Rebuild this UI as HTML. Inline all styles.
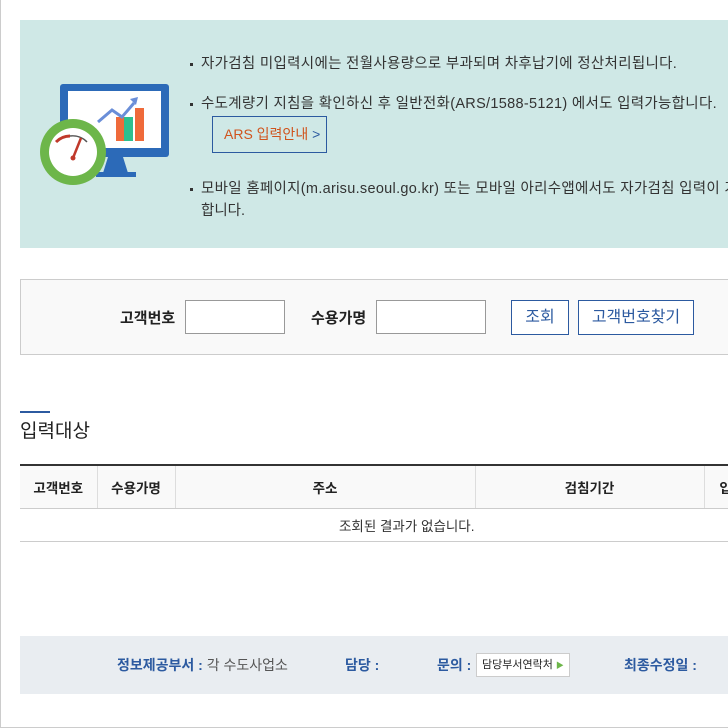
<!DOCTYPE html>
<html><head><meta charset="utf-8"><style>
*{margin:0;padding:0;box-sizing:border-box}
body{width:728px;height:728px;overflow:hidden;background:#fff;font-family:"Liberation Sans","Noto Sans CJK KR",sans-serif;color:#333;position:relative}
.frame{position:absolute;left:0;top:0;width:729px;height:728px;border-left:1px solid #ccc;border-bottom:1px solid #ccc}
.abs{position:absolute}
.banner{left:20px;top:20px;width:708px;height:228px;background:#cfe8e6}
.bl{font-size:14.5px;letter-spacing:0.3px;color:#333;white-space:nowrap}
.bl:before{content:"";display:inline-block;width:3px;height:3px;background:#333;margin-right:8px;vertical-align:middle}
.ars{left:212px;top:116px;width:115px;height:37px;border:1px solid #2c5aa0;font-size:14px;color:#d0541d;line-height:35px;padding-left:11px}
.search{left:20px;top:279px;width:710px;height:76px;background:#f9f9f9;border:1px solid #ccc}
.lab{font-size:15px;color:#222;font-weight:bold}
.inp{background:#fff;border:1px solid #999;height:34px}
.btn{border:1px solid #2c5aa0;background:#fff;color:#2c5aa0;font-size:16px;height:35px;line-height:33px;text-align:center}
table{border-collapse:collapse;font-size:13.5px}
th{background:#f9f9f9;height:43px;font-weight:bold;color:#222;border-right:1px solid #ddd;border-bottom:1px solid #ccc}
td{height:33px;text-align:center;border-bottom:1px solid #ccc}
.foot{left:20px;top:636px;width:710px;height:58px;background:#e9edf1}
.fb{color:#2c5aa0;font-weight:bold}
</style></head><body>
<div class="frame"></div>
<div class="abs banner"></div>
<svg class="abs" style="left:38px;top:84px" width="135" height="102" viewBox="0 0 135 102">
<rect x="22" y="0" width="109" height="73" rx="3" fill="#2c6ab8"/>
<rect x="30" y="7" width="93" height="57" fill="#fff"/>
<path d="M70 73h15l5 16H65z" fill="#2c6ab8"/>
<rect x="58" y="88" width="40" height="5" fill="#2c6ab8"/>
<rect x="78" y="33" width="8" height="24" fill="#ef6a3a"/>
<rect x="86" y="33" width="9" height="24" fill="#2dbf8f"/>
<rect x="97" y="24" width="9" height="33" fill="#ef6a3a"/>
<path d="M60 38l14-12 10 7 12-14" stroke="#6a8ed8" stroke-width="3" fill="none"/>
<path d="M92 15l8-2-2 8z" fill="#6a8ed8"/>
<circle cx="35" cy="68" r="33" fill="#6db64a"/>
<circle cx="35" cy="68" r="24" fill="#fff"/>
<path d="M18 58a20 20 0 0 1 14 -6" stroke="#c0392b" stroke-width="3" fill="none"/>
<path d="M32 52a20 20 0 0 1 17 6" stroke="#555" stroke-width="1.5" fill="none"/>
<path d="M35 74l8-20" stroke="#c0392b" stroke-width="2.5"/>
<circle cx="35" cy="74" r="2.5" fill="#c0392b"/>
</svg>
<div class="abs bl" style="left:190px;top:52px">자가검침 미입력시에는 전월사용량으로 부과되며 차후납기에 정산처리됩니다.</div>
<div class="abs bl" style="left:190px;top:92px">수도계량기 지침을 확인하신 후 일반전화(ARS/1588-5121) 에서도 입력가능합니다.</div>
<div class="abs ars">ARS 입력안내 <span style="color:#2c5aa0">&gt;</span></div>
<div class="abs bl" style="left:190px;top:177px">모바일 홈페이지(m.arisu.seoul.go.kr) 또는 모바일 아리수앱에서도 자가검침 입력이 가능</div>
<div class="abs" style="left:201px;top:199px;font-size:14.5px">합니다.</div>

<div class="abs search"></div>
<div class="abs lab" style="left:120px;top:307px">고객번호</div>
<div class="abs inp" style="left:185px;top:300px;width:100px"></div>
<div class="abs lab" style="left:311px;top:307px">수용가명</div>
<div class="abs inp" style="left:376px;top:300px;width:110px"></div>
<div class="abs btn" style="left:511px;top:300px;width:58px">조회</div>
<div class="abs btn" style="left:578px;top:300px;width:116px">고객번호찾기</div>

<div class="abs" style="left:20px;top:411px;width:30px;height:2px;background:#2c5aa0"></div>
<div class="abs" style="left:20px;top:416px;font-size:19px;color:#222">입력대상</div>

<table class="abs" style="left:20px;top:464px;width:740px;border-top:2px solid #333">
<tr><th style="width:77px">고객번호</th><th style="width:78px">수용가명</th><th style="width:300px">주소</th><th style="width:229px">검침기간</th><th>입력</th></tr>
<tr><td colspan="5" style="text-align:left;padding-left:319px">조회된 결과가 없습니다.</td></tr>
</table>

<div class="abs foot"></div>
<div class="abs" style="left:117px;top:655px;font-size:14px"><span class="fb">정보제공부서 :</span> <span style="color:#555">각 수도사업소</span></div>
<div class="abs fb" style="left:345px;top:655px;font-size:14px">담당 :</div>
<div class="abs fb" style="left:437px;top:655px;font-size:14px">문의 :</div>
<div class="abs" style="left:476px;top:653px;width:94px;height:24px;background:#fff;border:1px solid #ccc;font-size:11px;line-height:22px;padding-left:5px;color:#222">담당부서연락처 <span style="color:#6db64a;font-size:8px">▶</span></div>
<div class="abs fb" style="left:624px;top:655px;font-size:14px">최종수정일 :</div>
</body></html>
